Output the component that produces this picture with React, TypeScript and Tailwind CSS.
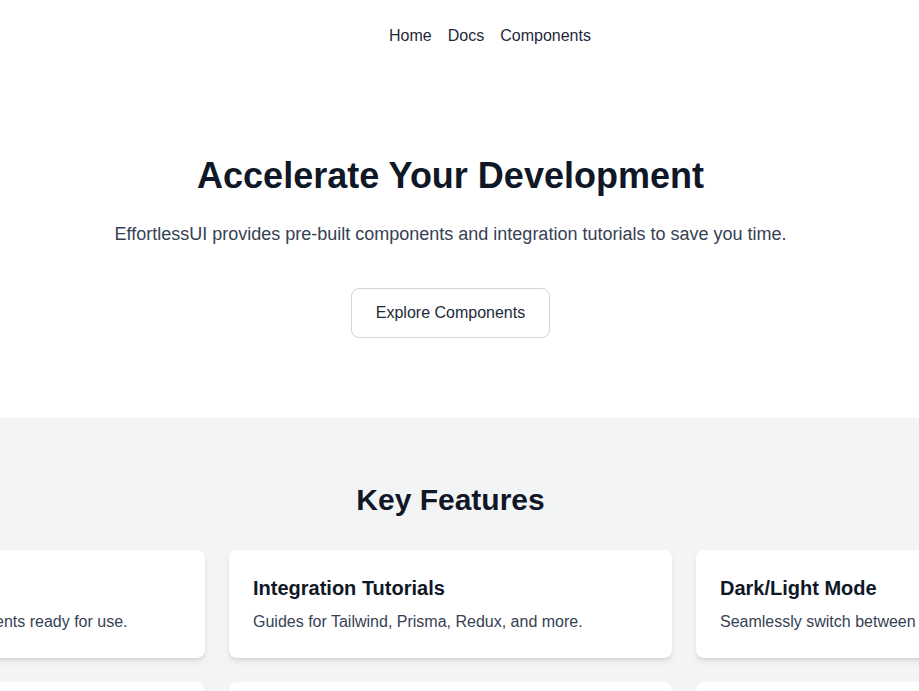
import React from 'react';

const features = [
  { title: 'Pre-built Components', text: 'A collection of stylish components ready for use.' },
  { title: 'Integration Tutorials', text: 'Guides for Tailwind, Prisma, Redux, and more.' },
  { title: 'Dark/Light Mode', text: 'Seamlessly switch between dark and light themes.' },
  { title: 'Responsive Design', text: 'Layouts that adapt to every screen size.' },
  { title: 'Accessible by Default', text: 'Built with ARIA roles and keyboard support.' },
  { title: 'Customizable Themes', text: 'Tweak colors, spacing and fonts with ease.' },
];

export default function App() {
  return (
    <div className="min-h-screen bg-white text-gray-800 overflow-hidden" style={{ fontFamily: '"Liberation Sans", Arial, sans-serif' }}>
      {/* Header */}
      <header className="w-[901px]">
        <nav className="flex justify-center gap-4 py-6 pl-[79px] text-base leading-6 text-gray-800">
          <a href="#">Home</a>
          <a href="#">Docs</a>
          <a href="#">Components</a>
        </nav>
      </header>

      {/* Hero */}
      <section className="w-[901px] pt-[84px] pb-20 text-center">
        <h1 className="text-4xl font-bold text-gray-900">Accelerate Your Development</h1>
        <p className="mt-6 text-lg text-gray-700">
          EffortlessUI provides pre-built components and integration tutorials to save you time.
        </p>
        <button className="mt-10 px-6 py-3 rounded-lg border border-gray-300 bg-white text-base text-gray-800">
          Explore Components
        </button>
      </section>

      {/* Features */}
      <section className="bg-gray-100 py-16">
        <div className="w-[901px]">
          <h2 className="text-3xl font-bold text-center text-gray-900 mb-8">Key Features</h2>
          <div className="flex justify-center">
            <div className="grid grid-cols-3 gap-6 w-[1377px] shrink-0">
              {features.map((f) => (
                <div key={f.title} className="bg-white rounded-lg shadow-md p-6">
                  <h3 className="text-xl font-semibold text-gray-900">{f.title}</h3>
                  <p className="mt-2 text-base text-gray-700">{f.text}</p>
                </div>
              ))}
            </div>
          </div>
        </div>
      </section>
    </div>
  );
}
